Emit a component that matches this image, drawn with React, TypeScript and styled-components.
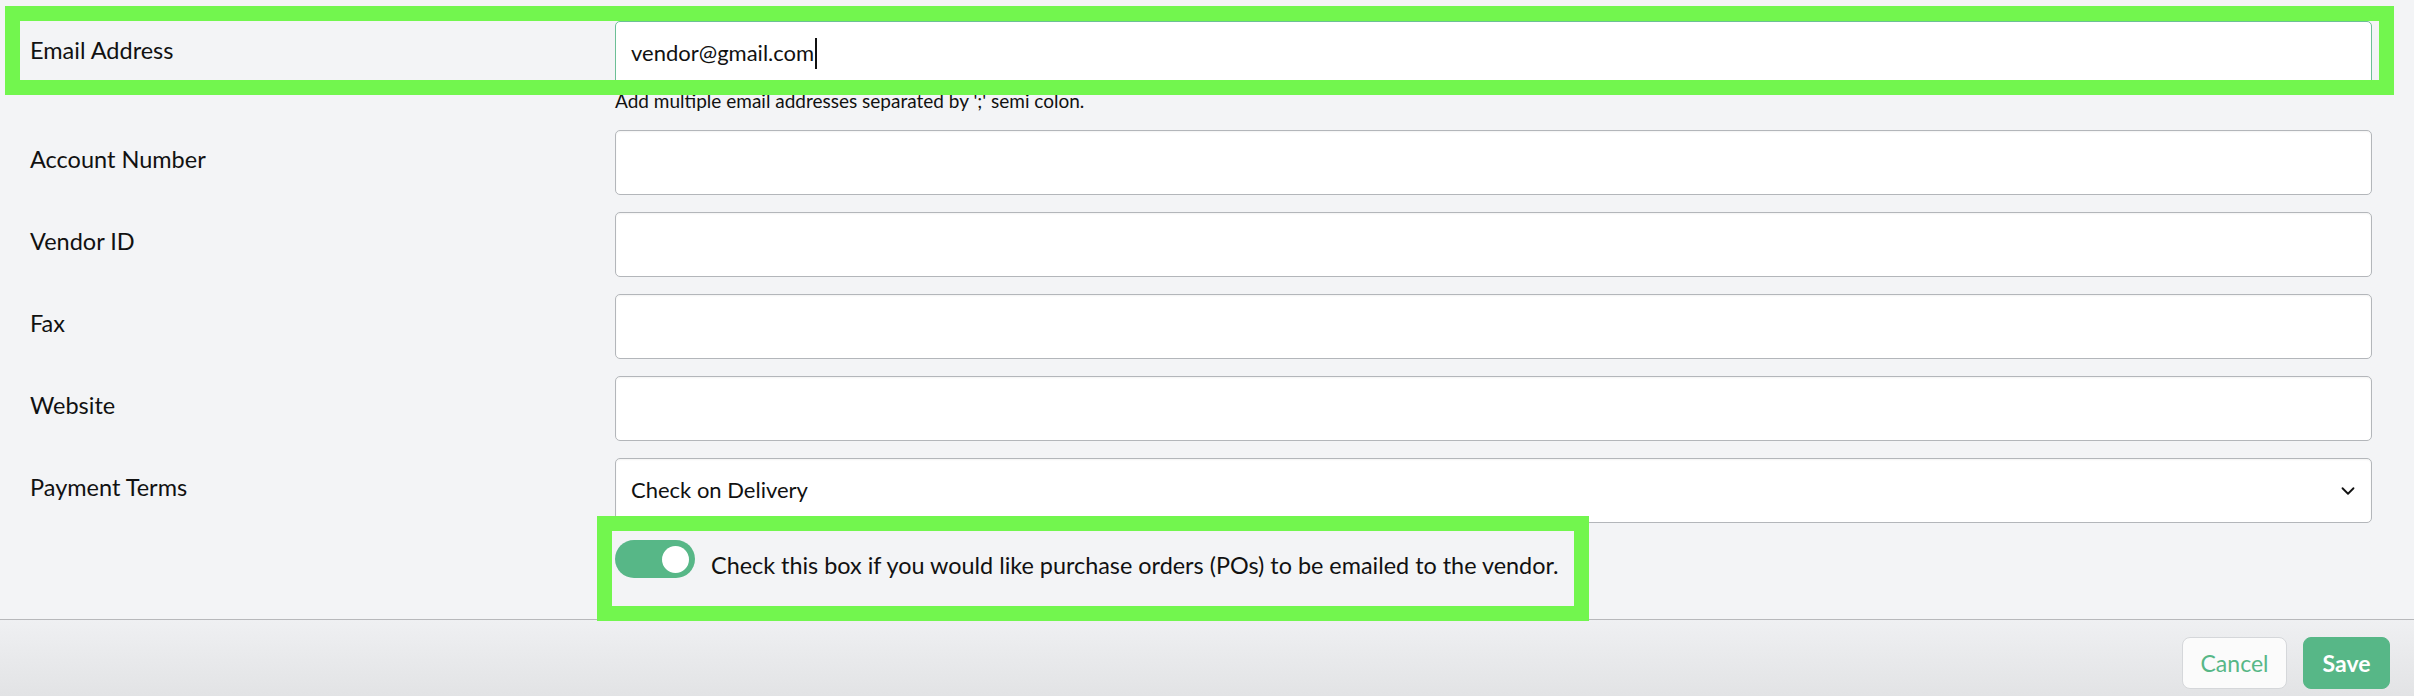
import React from "react";
import styled, { createGlobalStyle } from "styled-components";
import { ChevronDown } from "lucide-react";

const GlobalStyle = createGlobalStyle`
  html, body {
    margin: 0;
    padding: 0;
    background: #f3f4f6;
    overflow: hidden;
  }
  body {
    font-family: Lato, "Noto Sans", sans-serif;
    color: #111;
  }
  * { box-sizing: border-box; }
`;

const Page = styled.div`
  display: flex;
  flex-direction: column;
  width: 100%;
`;

const Form = styled.div`
  display: flex;
  flex-direction: column;
  gap: 17px;
  padding: 21px 42px 40px 30px;
  border-bottom: 1px solid #b7b8bb;
`;

const Row = styled.div`
  position: relative;
  display: grid;
  grid-template-columns: 585px 1fr;
  align-items: start;
`;

const Label = styled.div`
  font-size: 23.5px;
  line-height: 1.2;
  padding-top: 15px;
  color: #111;
`;

const Field = styled.div`
  display: flex;
  flex-direction: column;
  min-width: 0;
`;

const Box = styled.div<{ $focused?: boolean }>`
  display: flex;
  align-items: center;
  height: 65px;
  padding: 0 15px;
  background: #fff;
  border: 1px solid ${(p) => (p.$focused ? "#6cbf96" : "#b3b6ba")};
  border-radius: 5px;
  box-shadow: ${(p) => (p.$focused ? "none" : "inset 0 1px 2px rgba(0,0,0,0.05)")};
  font-size: 22px;
  line-height: 1.2;
  color: #111;
`;

const Value = styled.span`
  white-space: nowrap;
`;

const Caret = styled.span`
  display: inline-block;
  width: 2px;
  height: 31px;
  margin-left: 1px;
  background: #111;
`;

const SelectBox = styled(Box)`
  justify-content: space-between;
  padding-right: 12px;
`;

const Helper = styled.div`
  margin-top: 3px;
  font-size: 19px;
  line-height: 24px;
  color: #111;
`;

const ToggleRow = styled.div`
  position: relative;
  display: flex;
  align-items: flex-start;
  gap: 16px;
`;

const Toggle = styled.div<{ $on: boolean }>`
  flex: none;
  display: flex;
  align-items: center;
  justify-content: ${(p) => (p.$on ? "flex-end" : "flex-start")};
  width: 80px;
  height: 38px;
  padding: 0 6px;
  border-radius: 19px;
  background: ${(p) => (p.$on ? "#57b787" : "#c9ccd0")};
`;

const Knob = styled.div`
  width: 27px;
  height: 27px;
  border-radius: 50%;
  background: #fff;
`;

const ToggleText = styled.div`
  padding-top: 11px;
  font-size: 23.4px;
  line-height: 1.2;
  white-space: nowrap;
  color: #111;
`;

const Highlight = styled.div<{ $top: number; $left: number; $width: number; $height: number }>`
  position: absolute;
  top: ${(p) => p.$top}px;
  left: ${(p) => p.$left}px;
  width: ${(p) => p.$width}px;
  height: ${(p) => p.$height}px;
  border: 15px solid #72f64e;
  pointer-events: none;
`;

const Footer = styled.div`
  display: flex;
  justify-content: flex-end;
  gap: 16px;
  padding: 17px 24px 8px;
  background: linear-gradient(to bottom, #eff0f2, #e2e3e5);
`;

const Button = styled.button<{ $primary?: boolean }>`
  height: 52px;
  width: ${(p) => (p.$primary ? "87px" : "105px")};
  padding: 0;
  border-radius: 8px;
  border: 1px solid ${(p) => (p.$primary ? "#57b787" : "#d5d7da")};
  background: ${(p) => (p.$primary ? "#57b787" : "#fbfbfb")};
  color: ${(p) => (p.$primary ? "#fff" : "#57b787")};
  font-family: Lato, "Noto Sans", sans-serif;
  font-size: 23px;
  font-weight: ${(p) => (p.$primary ? 700 : 400)};
  cursor: pointer;
`;

const fields = [
  { label: "Account Number" },
  { label: "Vendor ID" },
  { label: "Fax" },
  { label: "Website" },
];

export default function App() {
  return (
    <Page>
      <GlobalStyle />
      <Form>
        <Row>
          <Highlight $top={-15} $left={-25} $width={2389} $height={89} />
          <Label>Email Address</Label>
          <Field>
            <Box $focused>
              <Value>vendor@gmail.com</Value>
              <Caret />
            </Box>
            <Helper>Add multiple email addresses separated by ';' semi colon.</Helper>
          </Field>
        </Row>
        {fields.map((f) => (
          <Row key={f.label}>
            <Label>{f.label}</Label>
            <Field>
              <Box />
            </Field>
          </Row>
        ))}
        <Row>
          <Label>Payment Terms</Label>
          <Field>
            <SelectBox>
              <Value>Check on Delivery</Value>
              <ChevronDown size={22} strokeWidth={2} color="#111" />
            </SelectBox>
          </Field>
        </Row>
        <Row>
          <div />
          <Field>
            <ToggleRow>
              <Highlight $top={-24} $left={-18} $width={992} $height={105} />
              <Toggle $on>
                <Knob />
              </Toggle>
              <ToggleText>
                Check this box if you would like purchase orders (POs) to be emailed to the vendor.
              </ToggleText>
            </ToggleRow>
          </Field>
        </Row>
      </Form>
      <Footer>
        <Button>Cancel</Button>
        <Button $primary>Save</Button>
      </Footer>
    </Page>
  );
}
